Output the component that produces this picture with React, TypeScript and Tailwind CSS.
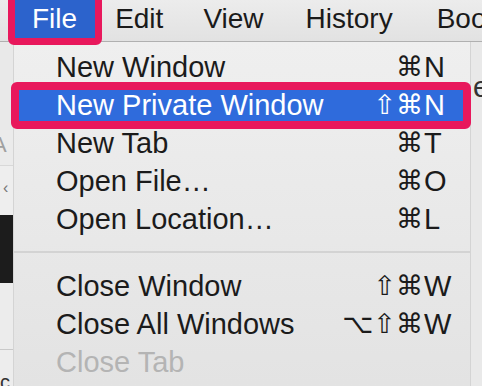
import React from "react";

const font = { fontFamily: '"Liberation Sans", "DejaVu Sans", Arial, sans-serif' };

type Item = { label: string; mods?: string; key?: string; disabled?: boolean; active?: boolean };

function Row({ label, mods = "", keyName = "", disabled, active }: { label: string; mods?: string; keyName?: string; disabled?: boolean; active?: boolean }) {
  return (
    <div
      className={
        "relative flex h-[38px] items-stretch pl-[42px] pr-[17px] text-[29px] leading-[38px] " +
        (active ? "bg-[#2f6bdc] text-white" : disabled ? "text-[#b4b4b4]" : "text-[#1b1b1b]")
      }
    >
      <span className="whitespace-nowrap">{label}</span>
      <span className="ml-auto flex">
        <span className="whitespace-nowrap text-right" style={{ fontFamily: '"DejaVu Sans", sans-serif', fontSize: "27px" }}>{mods}</span>
        <span className="w-[30px] pl-[1px] whitespace-nowrap">{keyName}</span>
      </span>
      {active && (
        <div className="pointer-events-none absolute -left-[3px] -right-[1px] -top-[4px] -bottom-[5px] z-10 rounded-[6px] border-[8px] border-[#e8185c]" />
      )}
    </div>
  );
}

export default function App() {
  return (
    <div className="relative h-[386px] w-[482px] overflow-hidden bg-[#e8e8e8]" style={font}>
      {/* Menu bar */}
      <div className="relative z-20 flex h-[42px] border-b border-[#b0b0b0] bg-gradient-to-b from-[#ececec] to-[#e2e2e2] text-[28px] leading-[38px] text-[#1a1a1a]">
        <div className="relative ml-[14px] h-[38px] bg-[#2c63cc] px-[18px] text-white">
          File
          <div className="pointer-events-none absolute -left-[6px] -right-[7px] -top-[7px] -bottom-[7px] rounded-[6px] border-[7px] border-[#e8185c]" />
        </div>
        <div className="h-[38px] px-[20px]">Edit</div>
        <div className="h-[38px] px-[20px]">View</div>
        <div className="h-[38px] px-[22px]">History</div>
        <div className="h-[38px] px-[22px] whitespace-nowrap">Bookmarks</div>
      </div>

      <div className="flex h-[344px]">
        {/* left background strip */}
        <div className="flex w-[13px] shrink-0 flex-col overflow-hidden">
          <div className="h-[88px] bg-[#e9e9e9]" />
          <div className="h-[35px] overflow-hidden bg-[#ebebeb] text-[22px] leading-[30px] text-[#a0a0a0]">
            <span className="-ml-[8px] inline-block">A</span>
          </div>
          <div className="h-[50px] border-t border-[#d8d8d8] bg-[#eeeeee] pl-[3px] pt-[12px] text-[16px] leading-[20px] text-[#777]">‹</div>
          <div className="h-[68px] bg-[#1c1c1c]" />
          <div className="h-[67px] border-b border-[#c9c9c9] bg-[#ececec]" />
          <div className="flex-1 overflow-hidden bg-[#ededed] pt-[22px] text-[20px] leading-[20px] text-[#333]">c</div>
        </div>

        {/* dropdown menu */}
        <div className="w-[458px] shrink-0 border-x border-[#d4d4d4] bg-gradient-to-b from-[#efefef] to-[#e3e3e3] pt-[6px]">
          <Row label="New Window" mods="⌘" keyName="N" />
          <Row label="New Private Window" mods="⇧⌘" keyName="N" active />
          <Row label="New Tab" mods="⌘" keyName="T" />
          <Row label="Open File…" mods="⌘" keyName="O" />
          <Row label="Open Location…" mods="⌘" keyName="L" />
          <div className="h-[29px] pt-[13px]">
            <div className="h-[2px] bg-[#d3d3d3]" />
          </div>
          <Row label="Close Window" mods="⇧⌘" keyName="W" />
          <Row label="Close All Windows" mods="⌥⇧⌘" keyName="W" />
          <Row label="Close Tab" disabled />
        </div>

        {/* right background strip */}
        <div className="w-[11px] shrink-0 overflow-hidden bg-[#e9e9e9]">
          <div className="pl-[2px] pt-[26px] text-[29px] leading-[38px] text-[#333]">e</div>
        </div>
      </div>
    </div>
  );
}
